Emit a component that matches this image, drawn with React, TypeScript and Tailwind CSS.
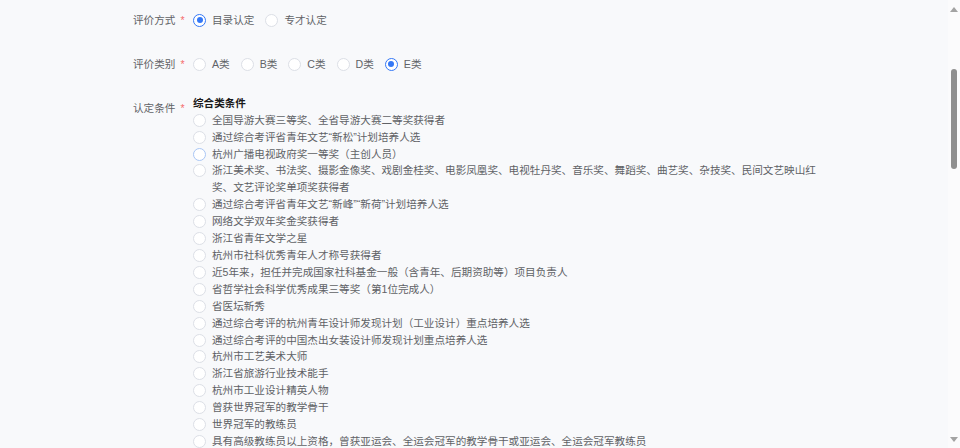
import React from "react";

const conditions = [
  "全国导游大赛三等奖、全省导游大赛二等奖获得者",
  "通过综合考评省青年文艺“新松”计划培养人选",
  "杭州广播电视政府奖一等奖（主创人员）",
  "浙江美术奖、书法奖、摄影金像奖、戏剧金桂奖、电影凤凰奖、电视牡丹奖、音乐奖、舞蹈奖、曲艺奖、杂技奖、民间文艺映山红奖、文艺评论奖单项奖获得者",
  "通过综合考评省青年文艺“新峰”“新荷”计划培养人选",
  "网络文学双年奖金奖获得者",
  "浙江省青年文学之星",
  "杭州市社科优秀青年人才称号获得者",
  "近5年来，担任并完成国家社科基金一般（含青年、后期资助等）项目负责人",
  "省哲学社会科学优秀成果三等奖（第1位完成人）",
  "省医坛新秀",
  "通过综合考评的杭州青年设计师发现计划（工业设计）重点培养人选",
  "通过综合考评的中国杰出女装设计师发现计划重点培养人选",
  "杭州市工艺美术大师",
  "浙江省旅游行业技术能手",
  "杭州市工业设计精英人物",
  "曾获世界冠军的教学骨干",
  "世界冠军的教练员",
  "具有高级教练员以上资格，曾获亚运会、全运会冠军的教学骨干或亚运会、全运会冠军教练员",
];

function Radio({ checked = false, hover = false }: { checked?: boolean; hover?: boolean }) {
  return (
    <span
      className={
        checked
          ? "flex h-[13px] w-[13px] shrink-0 items-center justify-center rounded-full border border-[#3478f6] bg-white"
          : hover
            ? "flex h-[13px] w-[13px] shrink-0 items-center justify-center rounded-full border border-[#a9c6f5] bg-white"
            : "flex h-[13px] w-[13px] shrink-0 items-center justify-center rounded-full border border-[#dcdfe6] bg-white"
      }
    >
      {checked && <span className="h-[6px] w-[6px] rounded-full bg-[#3478f6]" />}
    </span>
  );
}

function Option({ label, checked }: { label: string; checked?: boolean }) {
  return (
    <label className="mr-[11px] flex items-center gap-[6px]">
      <Radio checked={checked} />
      <span>{label}</span>
    </label>
  );
}

function FieldLabel({ text }: { text: string }) {
  return (
    <div className="flex w-[60px] shrink-0 items-center gap-[5px]">
      <span>{text}</span>
      <span className="text-[#f56c6c]">*</span>
    </div>
  );
}

function Arrow({ down }: { down?: boolean }) {
  return (
    <svg width="8" height="5" viewBox="0 0 8 5" className="shrink-0">
      <path d={down ? "M0 0 L8 0 L4 5 Z" : "M0 5 L8 5 L4 0 Z"} fill="#a3a3a3" />
    </svg>
  );
}

export default function App() {
  return (
    <div className="flex h-[448px] w-[960px] overflow-hidden bg-[#f8f9fb] font-['Liberation_Sans','Noto_Sans_CJK_SC',sans-serif] text-[10.6px] leading-[16.9px] text-[#606266]">
      <div className="flex-1 pl-[133px] pt-[12px]">
        <div className="flex">
          <FieldLabel text="评价方式" />
          <div className="flex">
            <Option label="目录认定" checked />
            <Option label="专才认定" />
          </div>
        </div>

        <div className="mt-[27px] flex">
          <FieldLabel text="评价类别" />
          <div className="flex">
            <Option label="A类" />
            <Option label="B类" />
            <Option label="C类" />
            <Option label="D类" />
            <Option label="E类" checked />
          </div>
        </div>

        <div className="mt-[22px] flex">
          <div className="pt-[5px]">
            <FieldLabel text="认定条件" />
          </div>
          <div className="flex flex-col">
            <div className="font-bold text-[#1a1a1a]">综合类条件</div>
            {conditions.map((c, i) => (
              <label key={c} className="flex items-start gap-[6px]">
                <span className="pt-[2px]">
                  <Radio hover={i === 2} />
                </span>
                <span className="w-[608px]">{c}</span>
              </label>
            ))}
          </div>
        </div>
      </div>

      <div className="flex w-[12px] shrink-0 flex-col items-center bg-[#fbfbfc] pb-[6px] pt-[7px]">
        <Arrow />
        <div className="mt-[57px] h-[100px] w-[6px] rounded-full bg-[#8f8f8f]" />
        <div className="flex-1" />
        <Arrow down />
      </div>
    </div>
  );
}
